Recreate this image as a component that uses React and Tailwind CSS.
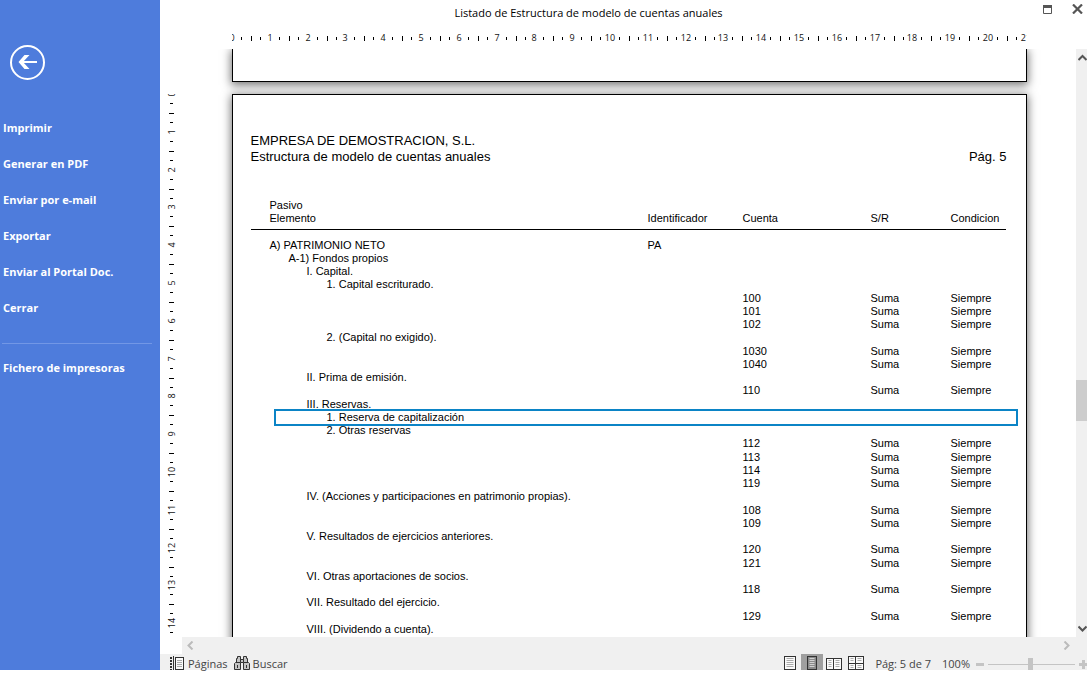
import React from 'react';

const ACTIONS = ['Imprimir', 'Generar en PDF', 'Enviar por e-mail', 'Exportar', 'Enviar al Portal Doc.', 'Cerrar'];

const text = (level, label, id = '') => ({ level, label, id });
const account = (cuenta) => ({ level: 0, label: '', id: '', cuenta });
const ROWS = [
  text(0, 'A) PATRIMONIO NETO', 'PA'),
  text(1, 'A-1) Fondos propios'),
  text(2, 'I. Capital.'),
  text(3, '1. Capital escriturado.'),
  account('100'),
  account('101'),
  account('102'),
  text(3, '2. (Capital no exigido).'),
  account('1030'),
  account('1040'),
  text(2, 'II. Prima de emisión.'),
  account('110'),
  text(2, 'III. Reservas.'),
  { ...text(3, '1. Reserva de capitalización'), selected: true },
  text(3, '2. Otras reservas'),
  account('112'),
  account('113'),
  account('114'),
  account('119'),
  text(2, 'IV. (Acciones y participaciones en patrimonio propias).'),
  account('108'),
  account('109'),
  text(2, 'V. Resultados de ejercicios anteriores.'),
  account('120'),
  account('121'),
  text(2, 'VI. Otras aportaciones de socios.'),
  account('118'),
  text(2, 'VII. Resultado del ejercicio.'),
  account('129'),
  text(2, 'VIII. (Dividendo a cuenta).'),
];
const INDENT = ['pl-[19px]', 'pl-[38px]', 'pl-[56px]', 'pl-[76px]'];

const CM = 37.8;

function HorizontalRuler() {
  const marks = Array.from({ length: 22 }, (_, i) => i);
  return (
    <svg width="795" height="20" viewBox="0 0 795 20" className="block shrink-0 overflow-hidden" aria-label="Regla horizontal">
      {marks.map((n) => (
        <g key={n}>
          <text x={Math.round(n * CM)} y="12" textAnchor="middle" fontSize="9" fill="#111">{n}</text>
          <rect x={Math.round(n * CM + 9)} y="8" width="1" height="3" />
          <rect x={Math.round(n * CM + 19)} y="7" width="1" height="5" />
          <rect x={Math.round(n * CM + 28)} y="8" width="1" height="3" />
        </g>
      ))}
    </svg>
  );
}

function VerticalRuler() {
  const marks = Array.from({ length: 15 }, (_, i) => i);
  return (
    <svg width="20" height="543" viewBox="0 0 20 543" className="block overflow-hidden" aria-label="Regla vertical">
      {marks.map((n) => (
        <g key={n}>
          <text transform={`translate(13 ${Math.round(n * CM)}) rotate(-90)`} textAnchor="middle" fontSize="9" fill="#111">{n}</text>
          <rect x="8" y={Math.round(n * CM + 9)} width="3" height="1" />
          <rect x="7" y={Math.round(n * CM + 19)} width="5" height="1" />
          <rect x="8" y={Math.round(n * CM + 28)} width="3" height="1" />
        </g>
      ))}
    </svg>
  );
}

function BackIcon() {
  return (
    <svg width="36" height="36" viewBox="0 0 36 36" fill="none" stroke="white">
      <circle cx="17.5" cy="17.5" r="16.5" strokeWidth="2" />
      <path d="M27 17H12" strokeWidth="2" />
      <path d="M14.500 10H19.500L13 17L19.500 24H14.500L8.500 17Z" fill="white" stroke="none" />
    </svg>
  );
}

function Chevron({ d, color }) {
  return (
    <svg width="9" height="9" viewBox="0 0 9 9" fill="none" stroke={color} strokeWidth="2" className="shrink-0">
      <path d={d} />
    </svg>
  );
}

function PagesIcon() {
  return (
    <svg width="14" height="14" viewBox="0 0 14 14" fill="none">
      <path d="M1 1V14" stroke="#333" strokeWidth="2" strokeDasharray="2 1" />
      <path d="M3.5 0V14" stroke="#333" />
      <rect x="5.5" y="1.5" width="8" height="12" fill="#fafafa" stroke="#333" />
      <path d="M7 4.5H12M7 6.5H12M7 8.5H12M7 10.5H12" stroke="#aaa" />
    </svg>
  );
}

function BinocularsIcon() {
  return (
    <svg width="16" height="14" viewBox="0 0 16 14" fill="#c4c4c4" stroke="#333">
      <path d="M2.5 6.5V2.500H3.500V0.5H6.5V6.5M9.500 6.5V0.5H12.500V2.500H13.500V6.5" />
      <path d="M6.5 3.500H9.5V6.5H6.5Z" />
      <path d="M6.5 6.5V13.5H0.5V7.5L1.500 6.500ZM9.5 6.5H14.500L15.5 7.5V13.5H9.5Z" />
      <path d="M3.500 9V12M12.500 9V12" />
    </svg>
  );
}

function Leaf({ x, y, w, h, fill = '#fafafa', line = '#aaa' }) {
  const lines = [];
  for (let ly = y + 2; ly < y + h - 1; ly += 2) lines.push(ly);
  return (
    <>
      <rect x={x} y={y} width={w} height={h} fill={fill} stroke="#333" />
      {lines.map((ly) => <path key={ly} d={`M${x + 2} ${ly}H${x + w - 2}`} stroke={line} />)}
    </>
  );
}

const VIEWS = [
  { name: 'Página completa', w: 12, h: 14, leaves: [[0.5, 0.5, 11, 13]] },
  { name: 'Ancho de página', w: 10, h: 14, leaves: [[0.5, 0.5, 9, 13]], active: true },
  { name: 'Dos páginas', w: 16, h: 12, leaves: [[0.5, 0.5, 7, 11], [7.5, 0.5, 8, 11]] },
  { name: 'Varias páginas', w: 16, h: 14, leaves: [[0.5, 0.5, 7, 7], [7.5, 0.5, 8, 7], [0.5, 7.5, 7, 6], [7.5, 7.5, 8, 6]] },
];

function Sidebar() {
  return (
    <nav className="flex w-40 shrink-0 flex-col bg-[#4e7cdc] text-[11px] font-bold text-white">
      <button type="button" aria-label="Volver" className="mt-[45px] ml-[10px] h-9 w-9"><BackIcon /></button>
      <ul className="mt-[29px]">
        {ACTIONS.map((a) => (
          <li key={a}><button type="button" className="block h-9 w-full pl-[3px] text-left">{a}</button></li>
        ))}
      </ul>
      <hr className="mt-[17px] mr-2 ml-[2px] border-[#7297e6]" />
      <button type="button" className="mt-[6px] h-9 pl-[3px] text-left">Fichero de impresoras</button>
    </nav>
  );
}

function Report() {
  return (
    <article className="h-[1123px] w-[795px] shrink-0 border border-black bg-white px-[18px] pt-[38px] font-['Liberation_Sans',sans-serif] shadow-[0_2px_9px_1px_rgba(0,0,0,0.55)]">
      <header className="mr-px text-[13px] leading-4">
        <p>EMPRESA DE DEMOSTRACION, S.L.</p>
        <div className="flex justify-between">
          <p>Estructura de modelo de cuentas anuales</p>
          <p>Pág. 5</p>
        </div>
      </header>
      <div className="mt-[34px] mr-[2px]">
        <table className="w-full table-fixed border-collapse text-left text-[11px] leading-[13px] whitespace-nowrap">
          <colgroup>
            <col />
            <col className="w-[95px]" />
            <col className="w-[128px]" />
            <col className="w-[80px]" />
            <col className="w-[55px]" />
          </colgroup>
          <thead>
            <tr className="border-b border-black align-bottom">
              <th className="pb-1 pl-[19px] font-normal">Pasivo<br />Elemento</th>
              <th className="pb-1 font-normal">Identificador</th>
              <th className="pb-1 font-normal">Cuenta</th>
              <th className="pb-1 font-normal">S/R</th>
              <th className="pb-1 font-normal">Condicion</th>
            </tr>
          </thead>
          <tbody className="before:block before:h-[9px]">
            {ROWS.map((r, i) => (
              <tr key={i} className={i % 4 === 3 ? 'h-[14px] align-top' : 'h-[13px] align-top'}>
                <td className={`relative p-0 ${INDENT[r.level]}`}>
                  {r.label}
                  {r.selected && <span className="absolute -top-[2px] left-[23px] h-[17px] w-[744px] border-2 border-[#0b84c6]" />}
                </td>
                <td className="p-0">{r.id}</td>
                <td className="p-0">{r.cuenta}</td>
                <td className="p-0">{r.cuenta && 'Suma'}</td>
                <td className="p-0">{r.cuenta && 'Siempre'}</td>
              </tr>
            ))}
          </tbody>
        </table>
      </div>
    </article>
  );
}

export default function App() {
  return (
    <div className="flex h-screen overflow-hidden bg-white pr-[5px] pb-[3px] font-['Open_Sans','Noto_Sans',sans-serif] text-[11px] text-black">
      <Sidebar />
      <main className="flex min-w-0 flex-1 flex-col">
        <header className="flex h-[29px] shrink-0 pr-1">
          <h1 className="flex-1 pt-1 pr-[26px] text-center leading-[18px]">Listado de Estructura de modelo de cuentas anuales</h1>
          <div className="flex h-[18px] items-center gap-5">
            <button type="button" aria-label="Maximizar">
              <svg width="9" height="9" viewBox="0 0 9 9" className="block"><path d="M0.5 1V8.500H8.500V1" fill="none" stroke="#555" /><path d="M0 1.500H9" stroke="#555" strokeWidth="3" /></svg>
            </button>
            <button type="button" aria-label="Cerrar ventana">
              <svg width="11" height="10" viewBox="0 0 11 10" className="block"><path d="M1 0.500L10 9.500M10 0.500L1 9.500" stroke="#555" strokeWidth="2.200" /></svg>
            </button>
          </div>
        </header>
        <div className="mr-[11px] ml-[22px] flex h-5 shrink-0 justify-center"><HorizontalRuler /></div>
        <div className="flex min-h-0 flex-1">
          <div className="w-[22px] shrink-0 overflow-hidden pt-[45px] pl-[2px]"><VerticalRuler /></div>
          <div className="flex min-w-0 flex-1 flex-col">
            <div className="flex min-h-0 flex-1">
              <div className="flex min-w-0 flex-1 flex-col items-center gap-3 overflow-hidden">
                <div className="h-[33px] w-[795px] shrink-0 border border-t-0 border-black bg-white shadow-[0_2px_9px_1px_rgba(0,0,0,0.55)]" />
                <Report />
              </div>
              <div className="flex w-[11px] shrink-0 flex-col items-end overflow-hidden bg-[#f0f0f0] pt-1">
                <Chevron d="M0.500 7L4.500 3L8.500 7" color="#555" />
                <div className="mt-[318px] h-[41px] w-full bg-[#cdcdcd]" />
                <div className="mt-auto mb-1"><Chevron d="M0.500 2.500L4.500 6.500L8.500 2.500" color="#555" /></div>
              </div>
            </div>
            <div className="flex h-[17px] shrink-0 items-center justify-between bg-[#f0f0f0] pr-4 pl-1">
              <Chevron d="M6.500 0.500L2.500 4.500L6.500 8.500" color="#bbb" />
              <Chevron d="M2.500 0.500L6.500 4.500L2.500 8.500" color="#bbb" />
            </div>
          </div>
        </div>
        <footer className="flex h-4 shrink-0 items-start bg-[#f0f0f0] pl-[10px] leading-4 text-[#444]">
          <button type="button" className="flex items-start gap-1 pt-[2px]"><PagesIcon />Páginas</button>
          <button type="button" className="ml-[6px] flex items-start gap-[3px] pt-[2px]"><BinocularsIcon />Buscar</button>
          <div className="ml-auto flex">
            {VIEWS.map((v) => (
              <button key={v.name} type="button" aria-label={v.name} className={v.active ? 'flex h-4 w-[22px] items-end justify-center bg-[#9f9f9f]' : 'flex h-4 w-[22px] items-end justify-center'}>
                <svg width={v.w} height={v.h} viewBox={`0 0 ${v.w} ${v.h}`}>
                  {v.leaves.map(([x, y, w, h]) => (
                    <Leaf key={`${x}-${y}`} x={x} y={y} w={w} h={h} fill={v.active ? '#8a8a8a' : '#fafafa'} line={v.active ? '#d0d0d0' : '#aaa'} />
                  ))}
                </svg>
              </button>
            ))}
          </div>
          <span className="ml-2 pt-[2px] whitespace-nowrap">Pág: 5 de 7</span>
          <span className="ml-[11px] pt-[2px] whitespace-nowrap">100%</span>
          <div className="ml-[6px] flex h-5 items-center">
            <button type="button" aria-label="Reducir">
              <svg width="8" height="3" viewBox="0 0 8 3" className="block"><path d="M0 1.500H8" stroke="#c4c4c4" strokeWidth="3" /></svg>
            </button>
            <input
              type="range"
              aria-label="Zoom"
              defaultValue="49"
              className="mx-1 h-3 w-[87px] cursor-pointer appearance-none bg-[linear-gradient(#c4c4c4,#c4c4c4)] bg-[length:100%_1px] bg-center bg-no-repeat [&::-webkit-slider-thumb]:h-3 [&::-webkit-slider-thumb]:w-[5px] [&::-webkit-slider-thumb]:appearance-none [&::-webkit-slider-thumb]:bg-[#c4c4c4]"
            />
            <button type="button" aria-label="Ampliar" className="w-2 shrink-0 overflow-hidden">
              <svg width="9" height="9" viewBox="0 0 9 9" className="block"><path d="M0 4.500H9M4.500 0V9" stroke="#c4c4c4" strokeWidth="3" /></svg>
            </button>
          </div>
        </footer>
      </main>
    </div>
  );
}
